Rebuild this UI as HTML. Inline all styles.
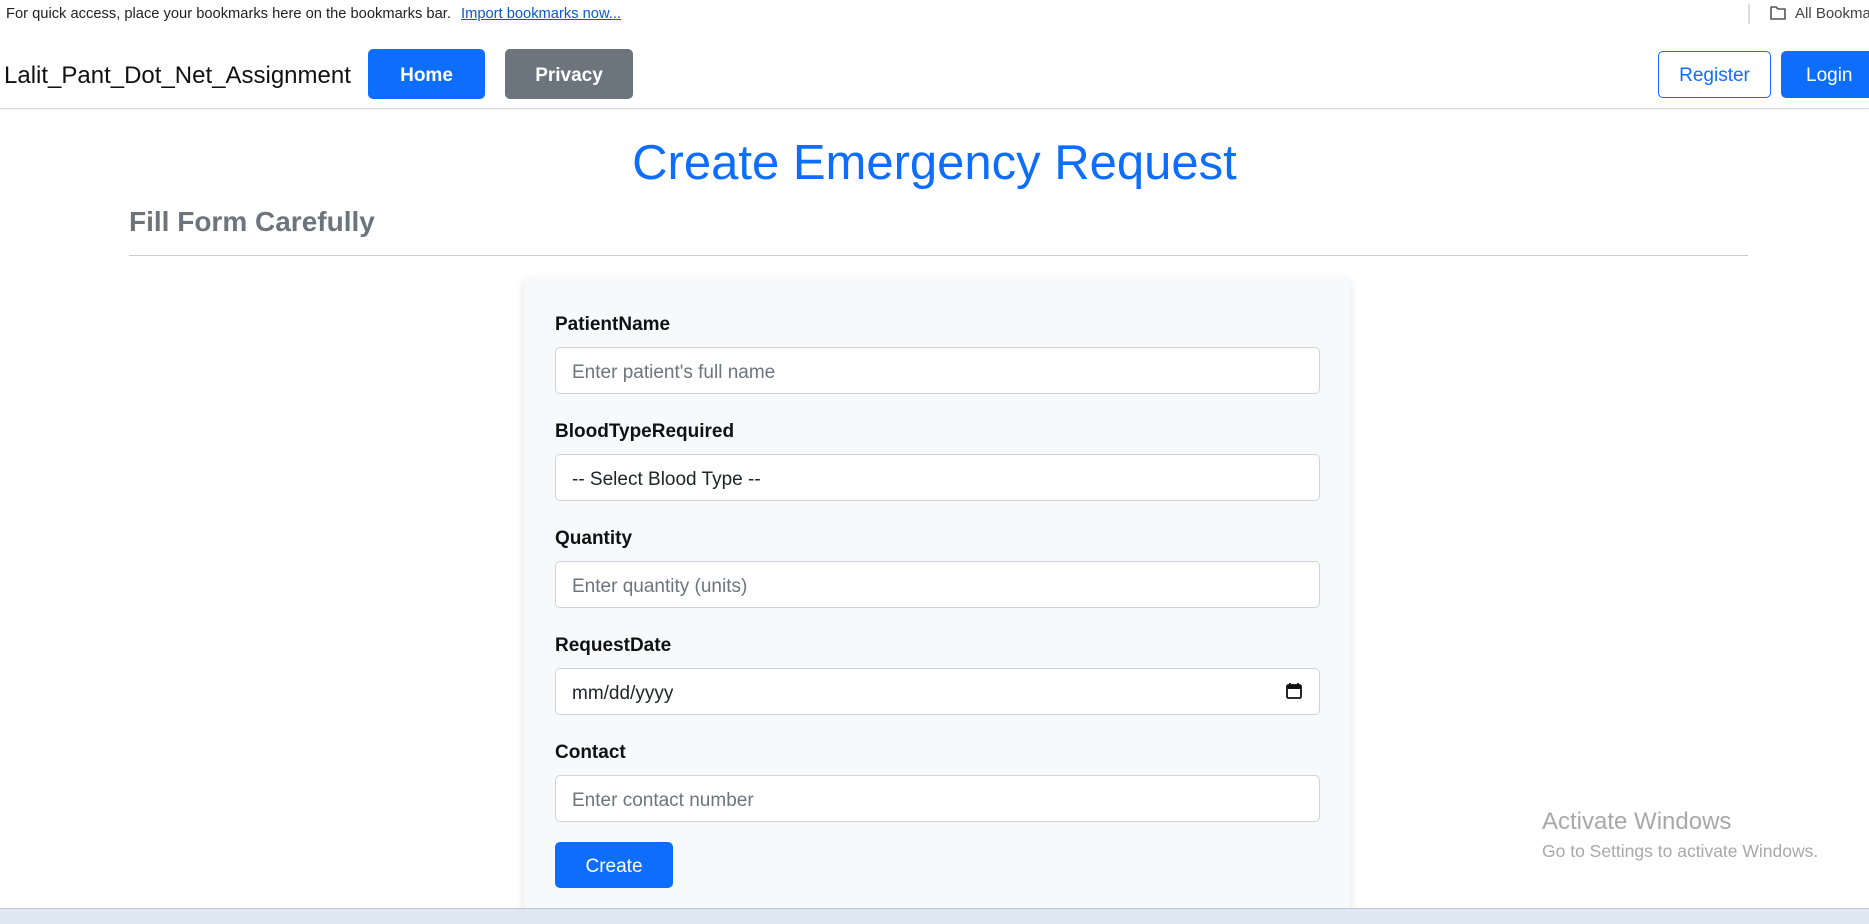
<!DOCTYPE html>
<html><head><meta charset="utf-8"><style>
*{box-sizing:border-box;margin:0;padding:0}
body{width:1869px;height:924px;overflow:hidden;background:#fff;font-family:"Liberation Sans",Arial,sans-serif;color:#212529;position:relative}
.abs{position:absolute}
.bm{left:6px;top:6px;font-size:14.7px;color:#222}
.bm a{color:#0b57d0;text-decoration:underline;margin-left:6px}
.nav{left:0;top:30px;width:1869px;height:79px;border-bottom:1px solid #dcdcdc;box-shadow:0 1px 3px rgba(0,0,0,.06)}
.brand{left:4px;top:62px;font-size:24px;color:#111}
.btn{position:absolute;display:flex;align-items:center;justify-content:center;border-radius:5px;font-size:19px;padding-top:3px}
.title{left:0;width:1869px;top:135px;text-align:center;font-size:49px;color:#0d6efd}
.sub{left:129px;top:206px;font-size:28px;font-weight:bold;color:#6c757d}
.hr{left:129px;top:255px;width:1619px;height:1px;background:#ccc}
.card{left:524px;top:278px;width:826px;height:640px;background:#f8f9fa;box-shadow:0 3px 10px rgba(0,0,0,.12);border-radius:5px}
.lbl{position:absolute;left:555px;font-size:19px;font-weight:bold;color:#111}
.inp{position:absolute;left:555px;width:765px;height:47px;background:#fff;border:1px solid #ced4da;border-radius:5px;font-size:19px;color:#6c757d;padding:14px 16px 0}
.task{left:0;top:908px;width:1869px;height:16px;background:#dfe8f3;border-top:1px solid #bcc5cf}
</style></head><body>
<div class="abs bm">For quick access, place your bookmarks here on the bookmarks bar. <a>Import bookmarks now...</a></div>
<div class="abs" style="left:1748px;top:4px;width:2px;height:20px;background:#ddd"></div>
<svg class="abs" style="left:1769px;top:5px" width="18" height="16" viewBox="0 0 18 16"><path d="M2 2h5l2 2h7v10H2z" fill="none" stroke="#555" stroke-width="1.6" stroke-linejoin="round"/></svg>
<div class="abs" style="left:1795px;top:5px;font-size:15px;color:#444;white-space:nowrap">All Bookmarks</div>
<div class="abs nav"></div>
<div class="abs brand">Lalit_Pant_Dot_Net_Assignment</div>
<div class="btn" style="left:368px;top:49px;width:117px;height:50px;background:#0d6efd;color:#fff;font-weight:bold">Home</div>
<div class="btn" style="left:505px;top:49px;width:128px;height:50px;background:#6c757d;color:#fff;font-weight:bold">Privacy</div>
<div class="btn" style="left:1658px;top:51px;width:113px;height:47px;border:1px solid #0d6efd;color:#0d6efd">Register</div>
<div class="btn" style="left:1781px;top:51px;width:100px;height:47px;background:#0d6efd;color:#fff;border-radius:5px 0 0 5px;justify-content:flex-start;padding-left:25px">Login</div>
<div class="abs title">Create Emergency Request</div>
<div class="abs sub">Fill Form Carefully</div>
<div class="abs hr"></div>
<div class="abs card"></div>
<div class="lbl" style="top:314px">PatientName</div>
<div class="inp" style="top:347px">Enter patient's full name</div>
<div class="lbl" style="top:421px">BloodTypeRequired</div>
<div class="inp" style="top:454px;color:#212529">-- Select Blood Type --</div>
<div class="lbl" style="top:528px">Quantity</div>
<div class="inp" style="top:561px">Enter quantity (units)</div>
<div class="lbl" style="top:635px">RequestDate</div>
<div class="inp" style="top:668px;color:#212529">mm/dd/yyyy
<svg style="position:absolute;right:16px;top:13px" width="18" height="18" viewBox="0 0 18 18"><rect x="2" y="3" width="14" height="13" rx="1.5" fill="none" stroke="#111" stroke-width="1.8"/><rect x="2" y="3" width="14" height="4" fill="#111"/><path d="M5 1v3M13 1v3" stroke="#111" stroke-width="1.8"/></svg></div>
<div class="lbl" style="top:742px">Contact</div>
<div class="inp" style="top:775px">Enter contact number</div>
<div class="btn" style="left:555px;top:842px;width:118px;height:46px;background:#0d6efd;color:#fff">Create</div>
<div class="abs" style="left:1542px;top:808px;font-size:24px;color:#a8a8a8">Activate Windows</div>
<div class="abs" style="left:1542px;top:841px;font-size:17.5px;color:#a8a8a8">Go to Settings to activate Windows.</div>
<div class="abs task"></div>
</body></html>
